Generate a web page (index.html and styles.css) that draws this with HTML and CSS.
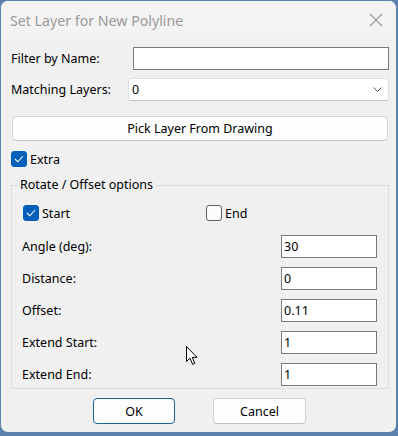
FILE: index.html
```html
<!DOCTYPE html>
<html lang="en">
<head>
    <meta charset="UTF-8">
    <title>Set Layer for New Polyline</title>
    <link rel="stylesheet" href="styles.css">
</head>
<body>
    <div class="window">
        <div class="titlebar">
            <span class="title">Set Layer for New Polyline</span>
            <svg class="close" width="14" height="14" viewBox="0 0 14 14">
                <path d="M1 1 L13 13 M13 1 L1 13" stroke="#9a9a9a" stroke-width="1.1" fill="none"/>
            </svg>
        </div>

        <div class="content">
            <div class="row">
                <label class="lbl-filter">Filter by Name:</label>
                <input type="text" class="text-input filter-input">
            </div>
            <div class="row row-match">
                <label class="lbl-match">Matching Layers:</label>
                <div class="select">
                    <span>0</span>
                    <svg width="9" height="5" viewBox="0 0 9 5">
                        <path d="M0.5 0.5 L4.5 4.5 L8.5 0.5" stroke="#555" stroke-width="1" fill="none"/>
                    </svg>
                </div>
            </div>

            <button class="btn btn-pick">Pick Layer From Drawing</button>

            <label class="check check-extra">
                <span class="box checked">
                    <svg width="10" height="8" viewBox="0 0 10 8"><path d="M1 4 L3.8 6.8 L9 1" stroke="#fff" stroke-width="1.1" fill="none"/></svg>
                </span>
                Extra
            </label>

            <fieldset class="group">
                <legend>Rotate / Offset options</legend>
                <div class="check-row">
                    <label class="check check-start">
                        <span class="box checked">
                            <svg width="10" height="8" viewBox="0 0 10 8"><path d="M1 4 L3.8 6.8 L9 1" stroke="#fff" stroke-width="1.1" fill="none"/></svg>
                        </span>
                        Start
                    </label>
                    <label class="check">
                        <span class="box"></span>
                        End
                    </label>
                </div>
                <div class="field"><span>Angle (deg):</span><input type="text" class="text-input num" value="30"></div>
                <div class="field"><span>Distance:</span><input type="text" class="text-input num" value="0"></div>
                <div class="field"><span>Offset:</span><input type="text" class="text-input num" value="0.11"></div>
                <div class="field"><span>Extend Start:</span><input type="text" class="text-input num" value="1"></div>
                <div class="field"><span>Extend End:</span><input type="text" class="text-input num" value="1"></div>
            </fieldset>

            <div class="actions">
                <button class="btn btn-ok">OK</button>
                <button class="btn btn-cancel">Cancel</button>
            </div>
        </div>

        <!-- mouse pointer -->
        <svg class="cursor" width="13" height="20" viewBox="0 0 13 20">
            <path d="M0.5 0.5 L0.5 15.5 L4 12.2 L6.6 18.3 L8.8 17.4 L6.3 11.4 L11 11.4 Z" fill="#fff" stroke="#000" stroke-width="1"/>
        </svg>
    </div>
</body>
</html>
```

FILE: styles.css
```css
* {
    box-sizing: border-box;
}

body {
    margin: 0;
    background: #5b82ab;
    font-family: "Noto Sans", "Liberation Sans", sans-serif;
}

.window {
    position: relative;
    width: 397px;
    height: 433px;
    border: 1px solid #5b82ab;
    border-radius: 8px;
    background: #f0f0f0;
    overflow: hidden;
    font-size: 12.5px;
    color: #000;
}

.titlebar {
    height: 38px;
    display: flex;
    align-items: center;
    justify-content: space-between;
    padding: 0 13px 0 9px;
    background: #f3f3f3;
}

.title {
    font-size: 14.2px;
    color: #9a9a9a;
}

.content {
    padding: 8px 6px 0 10px;
}

.row {
    display: flex;
    align-items: center;
}

.row-match {
    margin-top: 8px;
}

.lbl-filter {
    width: 122px;
}

.lbl-match {
    width: 117px;
}

.text-input {
    height: 23px;
    border: 1px solid #7a7a7a;
    background: #fff;
    font: inherit;
    padding: 0 2px;
    outline: none;
    color: #000;
}

.filter-input {
    width: 256px;
}

.select {
    width: 261px;
    height: 23px;
    display: flex;
    align-items: center;
    justify-content: space-between;
    padding: 0 6px 0 3px;
    background: #fff;
    border: 1px solid #e0e0e0;
    border-bottom-color: #c4c4c4;
    border-radius: 3px;
}

.btn {
    font: inherit;
    color: #000;
    background: #fdfdfd;
    border: 1px solid #d4d4d4;
    border-bottom-color: #c2c2c2;
    border-radius: 4px;
    height: 25px;
    padding: 0;
}

.btn-pick {
    display: block;
    width: 376px;
    margin: 15px 0 0 1px;
}

.check {
    display: flex;
    align-items: center;
    gap: 3px;
    height: 16px;
}

.check-extra {
    margin-top: 10px;
}

.check-start {
    width: 183px;
}

.box {
    width: 16px;
    height: 16px;
    border: 1px solid #5f5f5f;
    border-radius: 3px;
    background: #fbfbfb;
    display: flex;
    align-items: center;
    justify-content: center;
}

.box.checked {
    background: #005fb8;
    border-color: #005fb8;
}

.group {
    margin: 9px 0 0 0;
    width: 378px;
    border: 1px solid #dcdcdc;
    padding: 0 11px 2px 10px;
}

.group legend {
    margin-left: -4px;
    padding: 0 2px;
    line-height: 18px;
}

.check-row {
    display: flex;
    margin: 11px 0 0 1px;
}

.field {
    display: flex;
    align-items: center;
    justify-content: space-between;
    margin-top: 9px;
}

.check-row + .field {
    margin-top: 14px;
}

.num {
    width: 96px;
}

.actions {
    display: flex;
    gap: 38px;
    margin: 9px 0 0 82px;
}

.btn-ok {
    width: 82px;
    height: 26px;
    border-color: #1f6296;
}

.btn-cancel {
    width: 93px;
    height: 26px;
}

.cursor {
    position: absolute;
    left: 185px;
    top: 345px;
}
```
